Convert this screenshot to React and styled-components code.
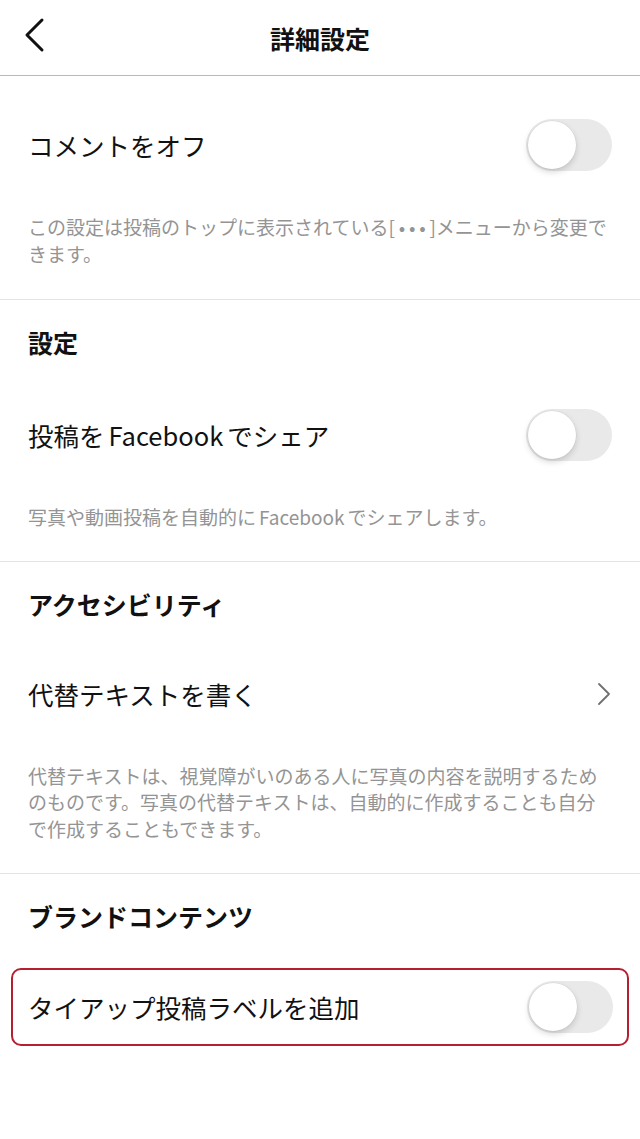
import React from 'react'
import styled, { createGlobalStyle } from 'styled-components'

var GlobalStyle = createGlobalStyle`
  html, body {
    margin: 0;
    padding: 0;
    background: #fff;
  }
  body {
    font-family: "Noto Sans CJK JP", "Noto Sans", sans-serif;
    color: #111;
  }
`

var Page = styled.div`
  width: 640px;
  min-height: 1139px;
  background: #fff;
`

var Header = styled.div`
  height: 75px;
  display: flex;
  align-items: center;
  justify-content: center;
  position: relative;
  border-bottom: 1px solid #b9b9b9;
`

var BackButton = styled.div`
  position: absolute;
  left: 22px;
  top: 17px;
  width: 24px;
  height: 36px;
  display: flex;
  align-items: center;
  justify-content: center;
`

var Title = styled.h1`
  margin: 0;
  font-size: 25px;
  font-weight: 700;
  line-height: 30px;
  color: #111;
`

var Section = styled.div`
  padding-top: ${p => p.top || 0}px;
  padding-bottom: ${p => p.bottom || 0}px;
  border-bottom: ${p => p.last ? 'none' : '1px solid #e3e3e3'};
`

var Heading = styled.h2`
  margin: 0;
  padding: 27px 28px ${p => p.bottom || 35}px;
  font-size: 25px;
  line-height: 30px;
  font-weight: 700;
  color: #111;
`

var Row = styled.div`
  display: flex;
  align-items: center;
  justify-content: space-between;
  min-height: ${p => p.compact ? 74 : 86}px;
  padding: 0 ${p => p.compact ? 14 : 28}px 0 ${p => p.compact ? 15 : 28}px;
`

var Label = styled.span`
  font-size: 25.5px;
  line-height: 32px;
  color: #111;
`

var Latin = styled.span`
  display: inline-block;
  margin: 0 ${p => p.gap || 4}px;
`

var Description = styled.p`
  margin: 0;
  padding: 26px 28px 30px;
  font-size: 19px;
  line-height: 26.6px;
  color: #949494;
`

var Highlight = styled.div`
  margin: 1px 11px 0;
  border: 2.5px solid #b51f2e;
  border-radius: 10px;
`

var Track = styled.div`
  width: 86px;
  height: 52px;
  border-radius: 26px;
  background: #e9e9ea;
  display: flex;
  align-items: center;
  padding-left: 2px;
  box-sizing: border-box;
  flex-shrink: 0;
`

var Knob = styled.div`
  width: 48px;
  height: 48px;
  border-radius: 50%;
  background: #fff;
  box-shadow: 0 0 0 0.5px rgba(0, 0, 0, 0.06), 0 3px 6px rgba(0, 0, 0, 0.16);
`

function Toggle() {
    return (
        <Track>
            <Knob />
        </Track>
    )
}

function Chevron() {
    return (
        <svg width="16" height="26" viewBox="0 0 16 26">
            <path d="M3 3 L13 13 L3 23" fill="none" stroke="#707070" strokeWidth="1.8" strokeLinecap="round" strokeLinejoin="round" />
        </svg>
    )
}

export default function App() {
    return (
        <Page>
            <GlobalStyle />
            <Header>
                <BackButton>
                    <svg width="22" height="36" viewBox="0 0 22 36">
                        <path d="M19 3 L4 18 L19 33" fill="none" stroke="#111" strokeWidth="3" strokeLinecap="round" strokeLinejoin="round" />
                    </svg>
                </BackButton>
                <Title>詳細設定</Title>
            </Header>

            <Section top={26} bottom={2}>
                <Row>
                    <Label>コメントをオフ</Label>
                    <Toggle />
                </Row>
                <Description>{'この設定は投稿のトップに表示されている[\u2009•\u2009•\u2009•\u2009]メニューから変更できます。'}</Description>
            </Section>

            <Section>
                <Heading>設定</Heading>
                <Row>
                    <Label>投稿を<Latin>Facebook</Latin>でシェア</Label>
                    <Toggle />
                </Row>
                <Description>写真や動画投稿を自動的に<Latin gap={3}>Facebook</Latin>でシェアします。</Description>
            </Section>

            <Section>
                <Heading bottom={32}>アクセシビリティ</Heading>
                <Row>
                    <Label>代替テキストを書く</Label>
                    <Chevron />
                </Row>
                <Description>代替テキストは、視覚障がいのある人に写真の内容を説明するためのものです。写真の代替テキストは、自動的に作成することも自分で作成することもできます。</Description>
            </Section>

            <Section last>
                <Heading bottom={36}>ブランドコンテンツ</Heading>
                <Highlight>
                    <Row compact>
                        <Label>タイアップ投稿ラベルを追加</Label>
                        <Toggle />
                    </Row>
                </Highlight>
            </Section>
        </Page>
    )
}
